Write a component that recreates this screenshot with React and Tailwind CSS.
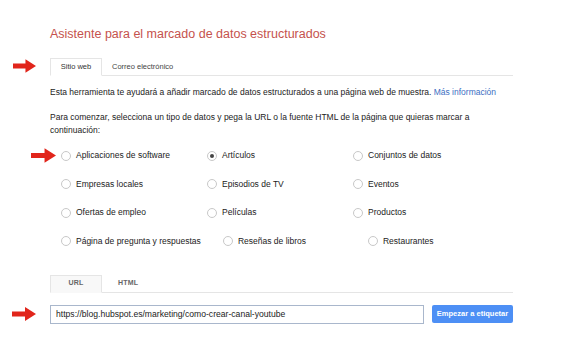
import React, { useState } from "react";

const tipos = [
  ["Aplicaciones de software", "Artículos", "Conjuntos de datos"],
  ["Empresas locales", "Episodios de TV", "Eventos"],
  ["Ofertas de empleo", "Películas", "Productos"],
  ["Página de pregunta y respuestas", "Reseñas de libros", "Restaurantes"],
];

function Arrow({ className }) {
  return (
    <svg viewBox="0 0 24 14" className={className}>
      <path d="M0 4.5 H13 V0 L24 7 L13 14 V9.5 H0 Z" fill="#e1251b" />
    </svg>
  );
}

function Radio({ label, checked, onClick, wide }) {
  return (
    <label
      onClick={onClick}
      className={`flex items-center gap-[5px] cursor-pointer ${wide ? "w-[163px]" : "w-[146px]"}`}
    >
      <span className="flex h-[10px] w-[10px] items-center justify-center rounded-full border border-[#c8c8c8] bg-white">
        {checked && <span className="h-[4px] w-[4px] rounded-full bg-[#444]" />}
      </span>
      <span>{label}</span>
    </label>
  );
}

export default function App() {
  const [tipo, setTipo] = useState("Artículos");
  const [url, setUrl] = useState(
    "https://blog.hubspot.es/marketing/como-crear-canal-youtube"
  );

  return (
    <div
      className="relative h-[342px] w-[580px] overflow-hidden bg-white text-[#222]"
      style={{ fontFamily: '"Liberation Sans", Arial, sans-serif' }}
    >
      <Arrow className="absolute left-[13px] top-[59px] h-[14px] w-[23px]" />
      <Arrow className="absolute left-[31px] top-[148px] h-[15px] w-[25px]" />
      <Arrow className="absolute left-[12px] top-[307px] h-[14px] w-[24px]" />

      <div className="w-[513px] pl-[50px] pt-[26px]">
        <h1 className="text-[12.5px] leading-[16px] text-[#c5524d]">
          Asistente para el marcado de datos estructurados
        </h1>

        <div className="mt-[16px] flex border-b border-[#e5e5e5] text-[7.5px]">
          <div className="-mb-px flex h-[18px] w-[52px] items-center justify-center border border-b-white border-[#e5e5e5] bg-white text-[#333]">
            Sitio web
          </div>
          <div className="flex h-[17px] items-center pl-[10px] text-[#444]">
            Correo electrónico
          </div>
        </div>

        <p className="mt-[10px] text-[8.5px] leading-[13px]">
          Esta herramienta te ayudará a añadir marcado de datos estructurados a
          una página web de muestra.{" "}
          <a href="#" className="text-[#3b6ec2]">Más información</a>
        </p>

        <p className="mt-[12px] pr-[20px] text-[8.5px] leading-[13px]">
          Para comenzar, selecciona un tipo de datos y pega la URL o la fuente
          HTML de la página que quieras marcar a continuación:
        </p>

        <div className="mt-[12px] flex flex-col gap-[15.5px] pl-[11px] text-[8.5px] leading-[13px]">
          {tipos.map((fila, i) => (
            <div key={i} className="flex">
              {fila.map((t, j) => (
                <Radio
                  key={t}
                  label={t}
                  wide={i === 3 && j === 0}
                  checked={tipo === t}
                  onClick={() => setTipo(t)}
                />
              ))}
            </div>
          ))}
        </div>

        <div className="mt-[27px] flex border-b border-[#e5e5e5] text-[7px] font-bold tracking-wide">
          <div className="-mb-px flex h-[18px] w-[52px] items-center justify-center border border-b-[#f8f8f8] border-[#e5e5e5] bg-[#f8f8f8] text-[#666]">
            URL
          </div>
          <div className="flex h-[17px] items-center pl-[16px] text-[#666]">
            HTML
          </div>
        </div>

        <div className="mt-[12px] flex items-center gap-[8px]">
          <input
            value={url}
            onChange={(e) => setUrl(e.target.value)}
            className="h-[19px] w-[374px] border border-[#a9b7cc] px-[5px] text-[8.6px] text-[#222] outline-none"
          />
          <button className="h-[18px] w-[81px] rounded-[2px] bg-[#4d8ff5] text-[7.5px] font-bold text-white">
            Empezar a etiquetar
          </button>
        </div>
      </div>
    </div>
  );
}
